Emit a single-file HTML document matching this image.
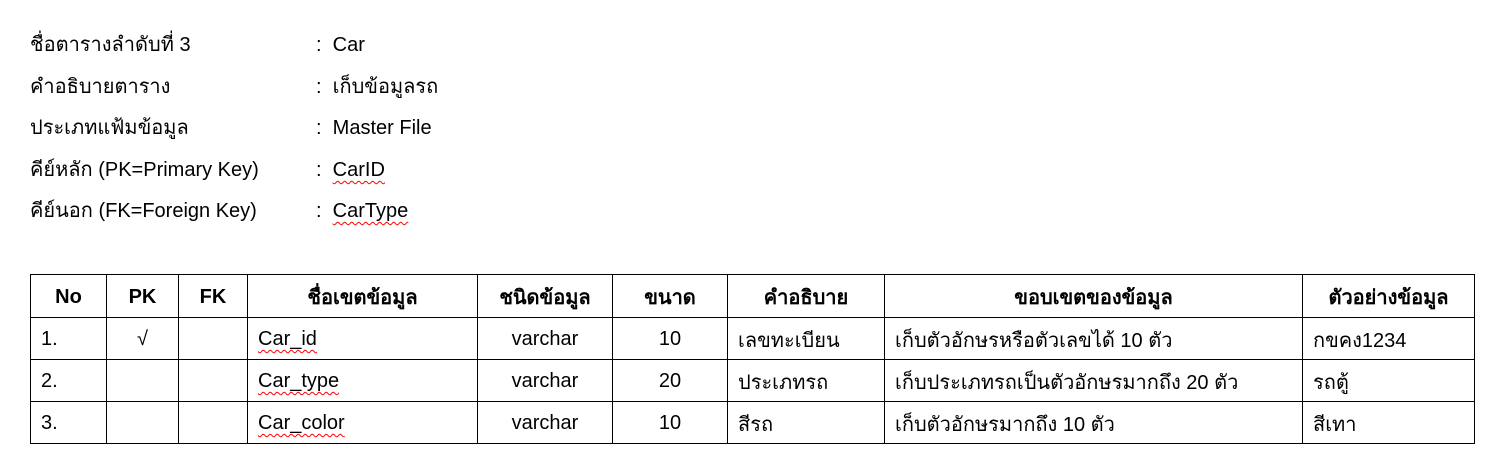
<!DOCTYPE html>
<html><head><meta charset="utf-8"><style>
body{margin:0;width:1507px;height:472px;background:#fff;font-family:"Liberation Sans","DejaVu Sans",sans-serif;color:#000;position:relative;overflow:hidden}
.l{position:absolute;left:30px;font-size:20px;line-height:24px}
.c{position:absolute;left:316px;font-size:20px;line-height:24px}
.w{text-decoration:underline wavy red;text-decoration-thickness:1px;text-underline-offset:4px}
table{position:absolute;left:30px;top:274px;border-collapse:collapse;font-size:20px}
td,th{border:1px solid #000;height:39px;padding:2px 10px 0;white-space:nowrap}
th{font-weight:bold;text-align:center;height:40px}
.ct{text-align:center}
</style></head><body>
<div class="l" style="top:33px">ชื่อตารางลำดับที่ 3</div><div class="c" style="top:33px">:&nbsp;&nbsp;Car</div>
<div class="l" style="top:75px">คำอธิบายตาราง</div><div class="c" style="top:75px">:&nbsp;&nbsp;เก็บข้อมูลรถ</div>
<div class="l" style="top:116px">ประเภทแฟ้มข้อมูล</div><div class="c" style="top:116px">:&nbsp;&nbsp;Master File</div>
<div class="l" style="top:158px">คีย์หลัก (PK=Primary Key)</div><div class="c" style="top:158px">:&nbsp;&nbsp;<span class="w">CarID</span></div>
<div class="l" style="top:199px">คีย์นอก (FK=Foreign Key)</div><div class="c" style="top:199px">:&nbsp;&nbsp;<span class="w">CarType</span></div>
<table>
<colgroup><col style="width:76px"><col style="width:72px"><col style="width:69px"><col style="width:230px"><col style="width:135px"><col style="width:115px"><col style="width:157px"><col style="width:418px"><col style="width:172px"></colgroup>
<tr><th>No</th><th>PK</th><th>FK</th><th>ชื่อเขตข้อมูล</th><th>ชนิดข้อมูล</th><th>ขนาด</th><th>คำอธิบาย</th><th>ขอบเขตของข้อมูล</th><th>ตัวอย่างข้อมูล</th></tr>
<tr><td>1.</td><td class="ct">√</td><td></td><td><span class="w">Car_id</span></td><td class="ct">varchar</td><td class="ct">10</td><td>เลขทะเบียน</td><td>เก็บตัวอักษรหรือตัวเลขได้ 10 ตัว</td><td>กขคง1234</td></tr>
<tr><td>2.</td><td></td><td></td><td><span class="w">Car_type</span></td><td class="ct">varchar</td><td class="ct">20</td><td>ประเภทรถ</td><td>เก็บประเภทรถเป็นตัวอักษรมากถึง 20 ตัว</td><td>รถตู้</td></tr>
<tr><td>3.</td><td></td><td></td><td><span class="w">Car_color</span></td><td class="ct">varchar</td><td class="ct">10</td><td>สีรถ</td><td>เก็บตัวอักษรมากถึง 10 ตัว</td><td>สีเทา</td></tr>
</table>
</body></html>
